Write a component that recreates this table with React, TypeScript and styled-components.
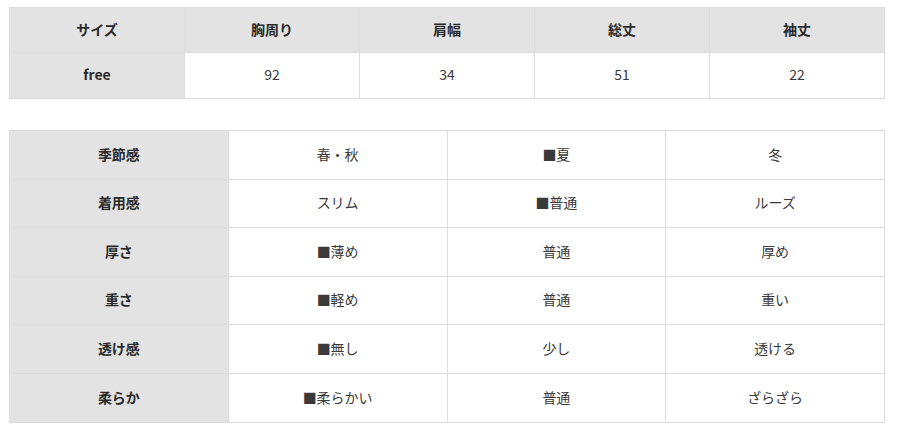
import React from "react";
import styled, { createGlobalStyle } from "styled-components";

const Global = createGlobalStyle`
  html, body { margin: 0; padding: 0; background: #fff; }
  body { font-family: "Noto Sans CJK JP", "DejaVu Sans", sans-serif; }
`;

const Page = styled.div`
  display: flex;
  flex-direction: column;
  gap: 31px;
  padding: 7px 0 0 9px;
`;

const Table = styled.table`
  width: 876px;
  border-collapse: collapse;
  table-layout: fixed;
  font-family: "Noto Sans CJK JP", "DejaVu Sans", sans-serif;
  font-size: 14px;
  line-height: 1.2;
  color: #333;
`;

const Row = styled.tr<{ $h: number }>`
  height: ${(p) => p.$h}px;
`;

const Cell = styled.td<{ $head?: boolean }>`
  border: 1px solid #dcdcdc;
  text-align: center;
  vertical-align: middle;
  padding: 0 0 2px;
  background: ${(p) => (p.$head ? "#e3e3e3" : "#fff")};
  font-weight: ${(p) => (p.$head ? 700 : 400)};
  color: ${(p) => (p.$head ? "#2a2a2a" : "#3a3a3a")};
`;

const sizeHead = ["サイズ", "胸周り", "肩幅", "総丈", "袖丈"];
const sizeRow = ["free", "92", "34", "51", "22"];

const feel: string[][] = [
  ["季節感", "春・秋", "■夏", "冬"],
  ["着用感", "スリム", "■普通", "ルーズ"],
  ["厚さ", "■薄め", "普通", "厚め"],
  ["重さ", "■軽め", "普通", "重い"],
  ["透け感", "■無し", "少し", "透ける"],
  ["柔らか", "■柔らかい", "普通", "ざらざら"],
];

const rowHeights = [49, 48, 49, 48, 49, 49];

export default function App() {
  return (
    <>
      <Global />
      <Page>
        <Table>
          <tbody>
            <Row $h={45}>
              {sizeHead.map((t) => (
                <Cell key={t} $head>
                  {t}
                </Cell>
              ))}
            </Row>
            <Row $h={46}>
              {sizeRow.map((t, i) => (
                <Cell key={i} $head={i === 0}>
                  {t}
                </Cell>
              ))}
            </Row>
          </tbody>
        </Table>
        <Table>
          <tbody>
            {feel.map((r, ri) => (
              <Row key={ri} $h={rowHeights[ri]}>
                {r.map((t, i) => (
                  <Cell key={i} $head={i === 0}>
                    {t}
                  </Cell>
                ))}
              </Row>
            ))}
          </tbody>
        </Table>
      </Page>
    </>
  );
}
